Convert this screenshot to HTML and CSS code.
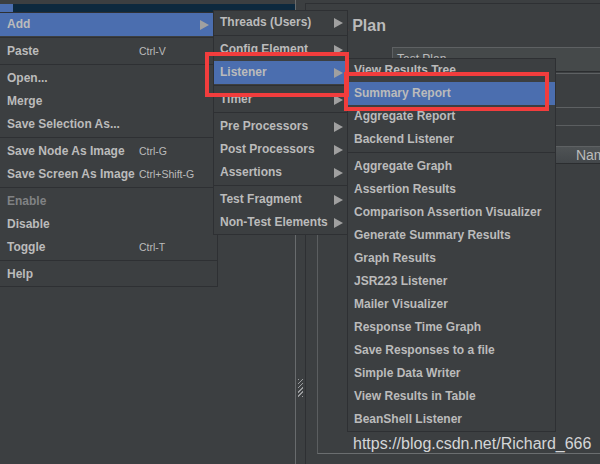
FILE: index.html
```html
<!DOCTYPE html>
<html lang="en">
<head>
    <meta charset="UTF-8">
    <meta name="viewport" content="width=device-width, initial-scale=1.0">
    <title>JMeter - Add Listener</title>
    <link rel="stylesheet" href="styles.css">
</head>
<body>
    <div class="window">
        <div class="tree">
            <div class="tree-row"><span class="tree-icon"></span><span class="tree-sel"></span></div>
        </div>
        <div class="splitter"><div class="grip"></div></div>
        <div class="editor">
            <h1 class="title">Test Plan</h1>
            <div class="field-row">
                <label>Name:</label>
                <div class="field">Test Plan</div>
            </div>
            <div class="field-row">
                <label>Comments:</label>
                <div class="field area"></div>
            </div>
            <div class="vars">
                <div class="table-head"><span>Name:</span><span>Value</span></div>
            </div>
        </div>
    </div>

    <ul class="menu menu-main">
        <li class="active"><span>Add</span><span class="arrow"></span></li>
        <li class="sep"></li>
        <li><span class="label">Paste</span><span class="key">Ctrl-V</span></li>
        <li class="sep"></li>
        <li><span class="label">Open...</span></li>
        <li><span class="label">Merge</span></li>
        <li><span class="label">Save Selection As...</span></li>
        <li class="sep"></li>
        <li><span class="label">Save Node As Image</span><span class="key">Ctrl-G</span></li>
        <li><span class="label">Save Screen As Image</span><span class="key">Ctrl+Shift-G</span></li>
        <li class="sep"></li>
        <li class="disabled"><span class="label">Enable</span></li>
        <li><span class="label">Disable</span></li>
        <li><span class="label">Toggle</span><span class="key">Ctrl-T</span></li>
        <li class="sep"></li>
        <li><span class="label">Help</span></li>
    </ul>

    <ul class="menu menu-add">
        <li><span>Threads (Users)</span><span class="arrow"></span></li>
        <li class="sep"></li>
        <li><span>Config Element</span><span class="arrow"></span></li>
        <li class="active"><span>Listener</span><span class="arrow"></span></li>
        <li class="sep"></li>
        <li><span>Timer</span><span class="arrow"></span></li>
        <li class="sep"></li>
        <li><span>Pre Processors</span><span class="arrow"></span></li>
        <li><span>Post Processors</span><span class="arrow"></span></li>
        <li><span>Assertions</span><span class="arrow"></span></li>
        <li class="sep"></li>
        <li><span>Test Fragment</span><span class="arrow"></span></li>
        <li><span>Non-Test Elements</span><span class="arrow"></span></li>
    </ul>

    <ul class="menu menu-listener">
        <li>View Results Tree</li>
        <li class="active">Summary Report</li>
        <li>Aggregate Report</li>
        <li>Backend Listener</li>
        <li class="sep"></li>
        <li>Aggregate Graph</li>
        <li>Assertion Results</li>
        <li>Comparison Assertion Visualizer</li>
        <li>Generate Summary Results</li>
        <li>Graph Results</li>
        <li>JSR223 Listener</li>
        <li>Mailer Visualizer</li>
        <li>Response Time Graph</li>
        <li>Save Responses to a file</li>
        <li>Simple Data Writer</li>
        <li>View Results in Table</li>
        <li>BeanShell Listener</li>
    </ul>

    <div class="mark mark-listener"></div>
    <div class="mark mark-summary"></div>

    <div class="watermark">https://blog.csdn.net/Richard_666</div>
</body>
</html>
```

FILE: styles.css
```css
body
{
    margin: 0;
    width: 600px;
    height: 464px;
    overflow: hidden;
    position: relative;
    background-color: #3c3f41;
    font-family: "Liberation Sans", Arial, sans-serif;
    color: #bbbbbb;
}
.window
{
    display: flex;
    height: 464px;
}

/* left tree */
.tree
{
    width: 295px;
    border-right: 1px solid #686b6d;
    padding-top: 4px;
    flex-shrink: 0;
}
.tree-row
{
    display: flex;
    height: 20px;
}
.tree-icon
{
    width: 13px;
    background-color: #4b6eaf;
}
.tree-sel
{
    flex: 1;
    background-color: #0d293e;
}
.splitter
{
    width: 9px;
    flex-shrink: 0;
    padding-top: 379px;
    box-sizing: border-box;
}
.grip
{
    width: 5px;
    height: 18px;
    margin-left: 2px;
    background: repeating-linear-gradient(135deg, #9a9c9e 0 1px, transparent 1px 3px);
}

/* right editor */
.editor
{
    flex: 1;
    min-width: 0;
    overflow: hidden;
    margin-top: 3px;
    border-top: 1px solid #2e3033;
    border-left: 1px solid #2e3033;
    padding-left: 7px;
}
.title
{
    margin: 12px 0 0 3px;
    font-size: 16px;
    line-height: 20px;
    font-weight: bold;
}
.field-row
{
    display: flex;
    margin-top: 1px;
}
.field-row:first-of-type
{
    margin-top: 11px;
}
.field-row label
{
    width: 79px;
    flex-shrink: 0;
    font-size: 12px;
    line-height: 24px;
}
.field
{
    flex: 1;
    height: 25px;
    box-sizing: border-box;
    border-top: 1px solid #5e6163;
    border-left: 1px solid #5e6163;
    border-bottom: 1px solid #2b2d2f;
    background-color: #45494a;
    padding-left: 4px;
    font-size: 12px;
    line-height: 23px;
}
.field.area
{
    height: 35px;
    background-color: #3c3f41;
    border-bottom-color: #5e6163;
}
.vars
{
    margin: 17px 0 0 4px;
    height: 329px;
    box-sizing: border-box;
    border-top: 1px solid #5b5e60;
    border-left: 1px solid #5b5e60;
    border-bottom: 1px solid #6b6e70;
    padding: 20px 0 0 4px;
}
.table-head
{
    display: grid;
    grid-template-columns: 549px 549px;
    height: 18px;
    box-sizing: border-box;
    border-top: 1px solid #5e6163;
    border-bottom: 1px solid #2b2d2f;
    background: linear-gradient(#4f5355, #43474a);
    font-size: 14px;
    line-height: 16px;
    text-align: center;
}

/* popup menus */
.menu
{
    position: absolute;
    margin: 0;
    padding: 0;
    list-style: none;
    background-color: #3c3f41;
    border: 1px solid #2e3033;
    font-size: 12px;
    font-weight: bold;
}
.menu li
{
    display: flex;
    align-items: center;
    height: 23px;
    line-height: 23px;
    white-space: nowrap;
}
.menu li.sep
{
    height: 1px;
    margin: 1px 0 2px;
    background-color: #2e3033;
}
.menu li.active
{
    background-color: #4b6eaf;
}
.menu li.disabled
{
    color: #808284;
}
.arrow
{
    margin-left: auto;
    width: 0;
    height: 0;
    border-left: 9px solid #a0a0a0;
    border-top: 5px solid transparent;
    border-bottom: 5px solid transparent;
}
.menu-main
{
    left: -1px;
    top: 12px;
    width: 217px;
}
.menu-main li
{
    padding-left: 7px;
    padding-right: 8px;
}
.menu-main .label
{
    width: 132px;
}
.key
{
    font-size: 10.5px;
    font-weight: normal;
}
.menu-add
{
    left: 213px;
    top: 10px;
    width: 133px;
}
.menu-add li
{
    padding-left: 6px;
    padding-right: 4px;
}
.menu-listener
{
    left: 347px;
    top: 58px;
    width: 207px;
}
.menu-listener li
{
    padding-left: 6px;
}

/* annotations */
.mark
{
    position: absolute;
    box-sizing: border-box;
    border: 4px solid #f23d3d;
}
.mark-listener
{
    left: 205px;
    top: 52px;
    width: 144px;
    height: 45px;
}
.mark-summary
{
    left: 344px;
    top: 72px;
    width: 205px;
    height: 39px;
}
.watermark
{
    position: absolute;
    left: 353px;
    top: 435px;
    font-size: 16px;
    line-height: 18px;
    color: #d4d6d8;
}
```
